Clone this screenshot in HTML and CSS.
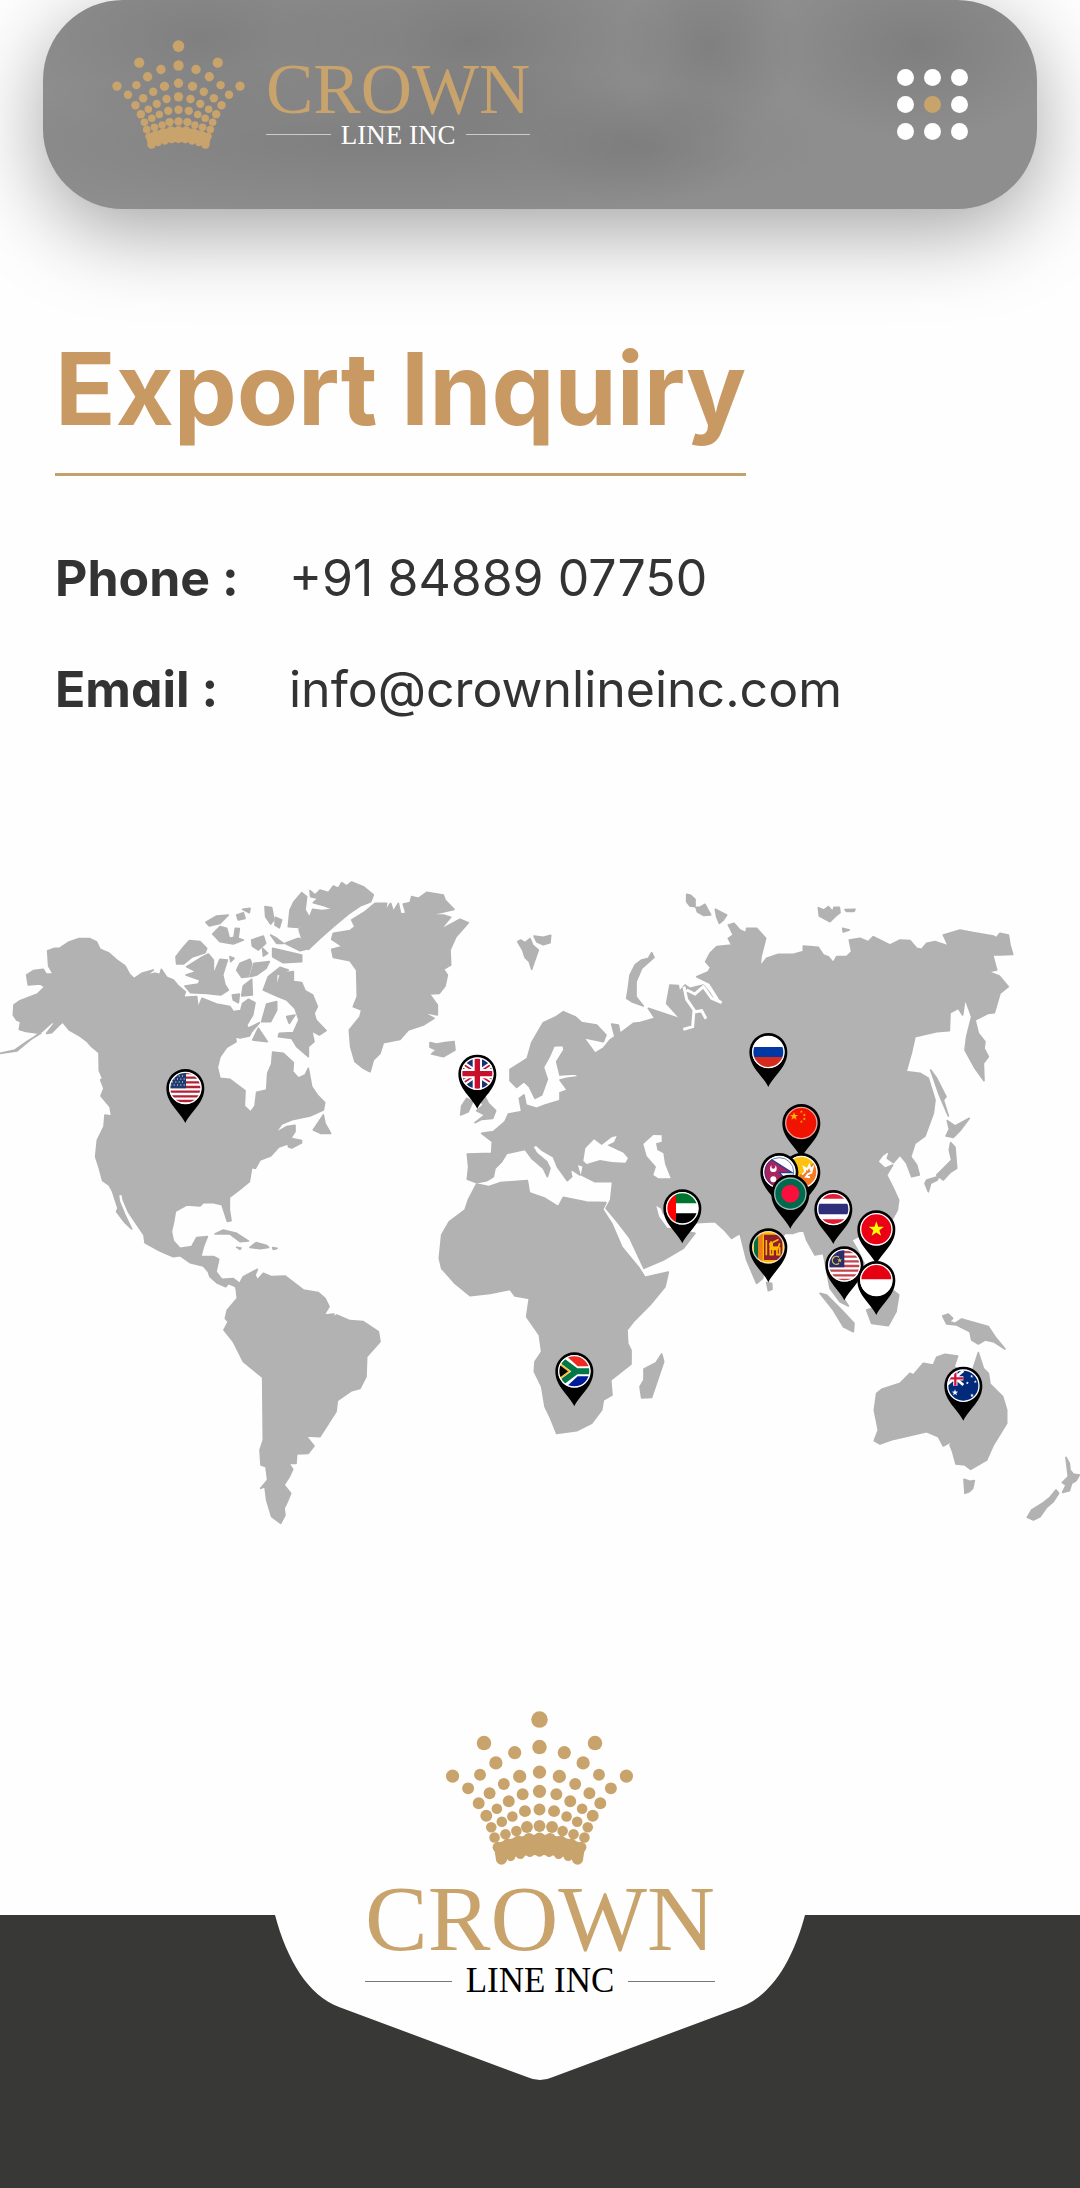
FILE: index.html
```html
<!DOCTYPE html>
<html lang="en">
<head>
    <meta charset="UTF-8">
    <meta name="viewport" content="width=device-width, initial-scale=1.0">

    <title>Crown Line Inc</title>
    <link rel="stylesheet" href="styles.css">
</head>

<body>
    <!-- shared shapes -->
    <svg class="defs" width="0" height="0" aria-hidden="true">
        <defs>
            <g id="crown-half">
                <circle cx="168" cy="157" r="22"/><circle cx="75" cy="186" r="20"/><circle cx="132" cy="217" r="20"/>
                <circle cx="263" cy="257" r="20"/><circle cx="180" cy="253" r="18"/><circle cx="60" cy="258" r="20"/>
                <circle cx="108" cy="281" r="18"/><circle cx="216" cy="294" r="18"/><circle cx="151" cy="309" r="18"/>
                <circle cx="51" cy="312" r="18"/><circle cx="93" cy="333" r="18"/><circle cx="184" cy="339" r="18"/>
                <circle cx="129" cy="356" r="16"/><circle cx="44" cy="363" r="18"/><circle cx="82" cy="379" r="16"/>
                <circle cx="161" cy="377" r="18"/><circle cx="114" cy="395" r="16"/><circle cx="38" cy="411" r="18"/>
                <circle cx="146" cy="412" r="16"/><circle cx="70" cy="423" r="16"/><circle cx="103" cy="433" r="16"/>
                <circle cx="136" cy="443" r="16"/><circle cx="126" cy="472" r="16"/><circle cx="96" cy="462" r="16"/>
                <circle cx="64" cy="454" r="17"/><circle cx="32" cy="447" r="18"/>
                <path d="M-1 434Q70 436 139 464L131 514Q70 496-1 496Z"/>
                <circle cx="115" cy="508" r="17"/><circle cx="87" cy="500" r="14"/><circle cx="58" cy="494" r="14"/>
                <circle cx="29" cy="489" r="13"/>
            </g>
            <symbol id="crown" viewBox="-284 60 568 466">
                <circle cx="0" cy="86" r="25"/><circle cx="0" cy="169" r="22"/><circle cx="0" cy="245" r="20"/>
                <circle cx="0" cy="303" r="20"/><circle cx="0" cy="358" r="18"/><circle cx="0" cy="408" r="18"/>
                <circle cx="0" cy="447" r="19"/><circle cx="0" cy="488" r="13"/>
                <use href="#crown-half"/>
                <use href="#crown-half" transform="scale(-1 1)"/>
            </symbol>
            <clipPath id="flag"><circle r="48"/></clipPath>
            <path id="pin" d="M0 105C-17 70-57 46-57 0A57 57 0 1 1 57 0C57 46 17 70 0 105Z"/>
            <circle id="ring" r="47" fill="none" stroke="#fff" stroke-width="4"/>
            <path id="star" d="M0-10L2.4-3.2 9.5-3.1 3.8 1.2 5.9 8.1 0 4-5.9 8.1-3.8 1.2-9.5-3.1-2.4-3.2Z"/>
        </defs>
    </svg>

    <header class="header">
        <a href="#" class="logo" aria-label="Crown Line Inc">
            <svg class="logo-crown"><use href="#crown"/></svg>
            <span class="logo-text">
                <span class="logo-name">CROWN</span>
                <span class="logo-tag">LINE INC</span>
            </span>
        </a>
        <button type="button" class="menu" aria-label="Menu">
            <span></span><span></span><span></span>
            <span></span><span class="gold"></span><span></span>
            <span></span><span></span><span></span>
        </button>
    </header>

    <main>
        <section class="inquiry">
            <h1>Export Inquiry</h1>
            <dl class="contact">
                <dt>Phone :</dt>
                <dd><a href="tel:+918488907750">+91 84889 07750</a></dd>
                <dt>Email :</dt>
                <dd><a href="mailto:info@crownlineinc.com">info@crownlineinc.com</a></dd>
            </dl>
        </section>

        <!-- export map -->
        <svg class="map" viewBox="0 0 3240 2040" role="img" aria-label="Export countries">
            <g class="land">
                <!-- north and central america -->
                <path d="M0 580L45 570 80 545 122 520 78 514 58 508 62 485 50 480 40 465 42 435 60 422 112 402 135 380 120 372 85 375 80 345 100 332 130 328 138 342 160 342 146 318 143 272 160 266 180 264 205 247 235 236 270 236 290 246 300 268 325 278 350 300 375 318 388 342 402 356 425 340 460 330 440 344 410 352 465 340 480 344 484 328 500 352 520 360 535 378 556 396 550 412 590 410 594 445 606 415 650 432 690 440 700 455 722 452 728 430 745 418 765 428 758 465 740 495 745 505 778 488 755 515 748 528 720 534 706 530 708 545 680 562 660 590 652 622 660 655 690 658 708 672 735 692 733 738 752 756 765 738 770 697 800 690 803 640 815 612 818 576 850 580 880 608 878 635 895 654 915 645 925 625 935 680 952 705 974 728 970 750 930 768 880 778 845 792 825 820 860 800 885 796 885 815 872 835 905 842 870 862 862 852 835 862 812 888 780 900 766 925 755 922 748 965 715 992 688 1012 688 1050 693 1082 682 1084 671 1050 666 1034 640 1028 610 1028 600 1038 560 1035 526 1054 521 1085 514 1115 520 1143 540 1165 575 1160 590 1133 622 1130 610 1160 602 1190 642 1190 656 1198 648 1235 665 1258 700 1256 716 1268 712 1290 700 1268 690 1265 677 1280 650 1268 630 1250 625 1235 610 1218 570 1208 540 1187 520 1190 480 1173 435 1148 432 1125 405 1085 385 1055 370 1020 367 1003 355 1003 358 1025 375 1065 395 1107 375 1088 350 1055 354 1045 338 995 328 976 308 962 298 925 287 890 292 840 312 800 315 765 335 768 330 740 303 708 312 685 302 660 308 655 298 632 297 578 275 560 262 545 240 528 208 510 188 486 175 498 155 518 140 520 168 484 155 488 125 515 90 540 50 573Z"/>
                <path d="M560 320L600 295 625 282 640 300 640 345 660 298 682 300 668 345 675 375 685 390 662 405 620 400 572 398 555 378 595 372 600 360 558 345 590 335Z"/>
                <path d="M528 290L550 262 568 242 600 245 620 265 615 278 575 292 550 312 530 312Z"/>
                <path d="M638 222L660 200 680 205 688 235 702 232 706 205 718 206 714 235 730 240 700 252 660 245Z"/>
                <path d="M618 187L650 168 685 165 660 190 628 198Z"/>
                <path d="M710 165L730 158 735 175 715 180ZM728 148L750 145 748 158ZM826 172L845 180 838 203 825 195Z"/>
                <path d="M795 140L815 143 822 180 812 192 797 170Z"/>
                <path d="M755 240L790 228 797 250 775 270 757 258ZM788 265L803 280 790 288ZM812 225L830 235 850 250 830 250Z"/>
                <path d="M818 265L860 275 905 285 905 305 850 308 818 290ZM855 250L895 235 930 248 928 265 900 272Z"/>
                <path d="M865 200L870 150 882 125 905 98 920 110 915 150 928 172 895 202Z"/>
                <path d="M930 92L945 105 960 90 985 98 1000 78 1015 85 1025 68 1040 78 1055 66 1090 80 1120 105 1112 125 1080 138 1045 162 1000 200 960 235 925 268 905 235 897 208 930 168 938 148 965 152 1000 148 975 138 940 128 955 115 932 110Z"/>
                <path d="M720 310L750 298 755 312 745 350 725 352 710 330ZM690 290L702 295 692 305ZM697 405L718 402 715 428 700 420Z"/>
                <path d="M790 390L805 350 840 322 865 330 830 345 828 390 842 340 880 335 880 365 905 368 915 392 938 405 952 440 942 460 948 480 978 512 958 525 935 512 942 545 925 560 925 590 890 560 875 535 835 530 838 520 880 518 897 480 885 445 860 420 830 408Z"/>
                <path d="M762 310L808 305 798 325 770 345 750 350ZM730 378L755 358 757 405 725 408Z"/>
                <path d="M785 485L800 432 830 425 830 450 812 485ZM758 540L775 505 802 545ZM860 470L885 465 868 490ZM940 810L970 765 975 790 992 820 962 820ZM865 860L900 842 905 848 875 864Z"/>
                <path d="M645 1122L670 1110 710 1120 745 1143 720 1145 690 1122ZM750 1162L768 1148 800 1157 806 1162 780 1166ZM710 1162L723 1164 720 1168ZM818 1163L831 1165 820 1168Z"/>

                <!-- greenland, europe, arabia -->
                <g transform="translate(990 0)">
                    <path d="M65 180L105 155 135 130 170 130 165 155 182 130 190 155 205 130 212 162 228 160 220 132 240 128 245 110 265 115 290 97 340 105 345 120 372 148 330 158 290 165 340 165 362 172 330 210 390 178 415 188 400 205 378 230 360 270 362 315 340 328 352 345 345 378 328 400 298 402 322 435 322 465 275 455 312 475 280 495 235 510 210 538 160 548 150 580 130 600 120 635 100 625 75 605 62 560 58 510 90 470 95 450 70 440 82 410 80 330 60 302 10 292 5 268 38 260 5 238 10 220 60 212 75 200Z"/>
                    <path d="M300 548L320 552 345 548 372 545 375 570 340 590 305 582 320 570 300 562Z"/>
                    <path d="M563 245L572 240 585 248 600 236 608 255 625 270 618 290 605 328 598 305 585 292 578 270ZM612 228L640 232 662 226 660 248 640 254 620 245Z"/>
                    <path d="M900 345L915 315 935 300 955 295 965 278 972 292 935 325 918 365 918 410 940 438 905 425 890 415 895 385Z"/>
                    <path d="M430 690L460 700 475 730 497 752 488 775 455 778 435 788 465 765 440 752 460 735ZM395 738L410 715 428 725 415 755 392 765Z"/>
                    <path d="M440 968L412 958 416 920 412 882 485 880 487 845 455 820 490 815 525 785 535 762 575 755 568 715 582 705 588 735 620 745 645 735 690 722 690 698 712 690 690 660 710 655 750 650 735 642 690 645 680 605 702 570 700 556 672 558 658 590 640 622 652 658 635 705 615 715 598 680 582 665 560 682 540 662 540 628 592 595 605 548 640 488 675 472 700 455 735 470 755 488 800 495 828 525 820 545 760 532 795 580 820 565 840 540 855 530 845 492 865 495 870 520 910 490 930 488 975 475 955 445 1000 460 1045 475 1110 505 1120 1085 1070 1080 1040 1085 1000 1060 995 1045 975 1032 985 1070 1010 1105 1050 1112 1095 1120 1060 1165 1000 1200 942 1225 930 1200 900 1135 862 1085 828 1045 842 1020 848 965 795 965 755 945 760 918 740 912 750 945 720 925 725 950 712 962 682 920 670 890 635 870 618 855 608 860 620 880 650 905 660 925 652 950 640 925 605 895 585 868 530 880 515 905 495 925 490 950 470 962Z"/>
                </g>

                <!-- asia -->
                <g transform="translate(1980 0)">
                    <path d="M60 475L20 430 30 375 55 377 58 395 75 375 90 385 130 375 150 400 165 425 188 430 150 370 110 350 145 335 152 322 137 305 150 280 170 260 215 255 205 235 220 225 205 195 222 190 240 210 258 218 260 205 290 205 317 235 303 290 300 320 320 295 355 283 400 283 430 275 430 258 475 262 490 285 505 290 520 308 530 290 560 290 575 275 568 240 600 235 625 245 640 230 690 255 720 240 750 242 770 265 785 268 800 250 825 245 865 258 850 225 900 210 940 218 1000 228 1025 245 1010 232 1020 220 1045 225 1050 255 1058 283 1020 285 998 285 1010 330 985 335 1018 348 1045 380 1020 400 1003 458 985 460 945 480 955 520 975 545 972 565 985 590 970 610 972 662 945 625 915 570 920 530 935 470 915 415 908 465 895 445 870 458 868 512 830 515 765 530 755 575 738 635 780 640 805 655 825 720 820 760 795 828 765 850 752 890 770 915 778 945 755 950 740 910 720 885 700 908 682 895 690 870 668 885 653 905 675 925 698 915 680 945 700 985 716 1020 712 1050 695 1080 650 1110 610 1122 575 1140 590 1165 612 1210 600 1240 560 1210 530 1160 518 1180 510 1230 540 1298 565 1338 540 1325 510 1285 500 1230 490 1180 465 1185 440 1140 430 1110 400 1120 375 1120 340 1170 315 1205 308 1255 290 1270 260 1200 240 1120 215 1135 195 1112 165 1085 110 1088 60 1082Z"/>
                    <path d="M812 630L830 655 858 710 850 720 865 768 838 705ZM862 782L885 798 928 775 900 812 880 832 858 828 868 808ZM872 848L885 862 890 925 870 938 850 960 830 945 860 915 875 900 868 870ZM800 960L835 950 832 960 812 970 805 995 795 970Z"/>
                    <path d="M80 103L92 106 105 118 105 140 90 138 80 125ZM108 142L120 142 135 133 152 165 130 166 112 155ZM166 148L200 165 190 180 178 190 170 170Z"/>
                    <path d="M475 143L492 150 505 140 518 155 522 142 538 142 540 158 525 170 510 185 478 168ZM555 149L585 148 582 154 560 154ZM548 205L568 210 550 216Z"/>
                    <path d="M480 1300L500 1305 545 1350 582 1390 580 1415 550 1400 520 1350ZM620 1350L650 1340 700 1292 716 1305 708 1355 685 1397 635 1390ZM320 1268L335 1270 336 1288 325 1292Z"/>
                    <path d="M848 1368L865 1362 878 1375 868 1385 885 1390 905 1377 985 1400 1005 1430 1035 1467 1000 1445 975 1440 955 1452 935 1440 930 1415 890 1395 860 1392Z"/>
                    <path d="M650 1600L665 1588 720 1570 750 1540 760 1545 790 1510 820 1515 830 1492 855 1483 893 1488 882 1520 915 1540 938 1530 955 1478 970 1525 985 1540 990 1572 1028 1610 1040 1650 1040 1690 1000 1755 980 1800 932 1828 915 1815 888 1812 878 1775 870 1755 882 1740 850 1758 835 1730 800 1715 745 1728 700 1738 660 1752 643 1742 655 1710 643 1650Z"/>
                    <path d="M912 1858L930 1864 943 1862 938 1885 928 1895 915 1900ZM1218 1792L1228 1810 1230 1830 1240 1842 1258 1845 1248 1862 1235 1870 1228 1892 1208 1897 1218 1875 1207 1868 1225 1850ZM1188 1890L1196 1900 1180 1925 1160 1942 1140 1970 1120 1980 1102 1972 1115 1950 1150 1928 1170 1912Z"/>
                </g>

                <!-- south america, africa -->
                <g transform="translate(600 960)">
                    <path d="M80 308L100 300 115 318 130 290 172 268 165 285 172 300 190 280 215 290 255 288 310 330 355 338 375 355 387 380 372 405 402 402 392 418 410 405 450 422 490 425 535 455 540 485 500 530 498 590 480 625 455 632 412 662 408 695 360 770 318 768 342 798 325 820 290 822 288 850 266 850 278 868 268 890 252 915 272 940 262 965 252 985 255 1005 242 1030 215 1010 200 960 195 920 182 925 203 900 198 860 183 855 180 810 190 780 188 592 130 545 100 485 72 450 85 425 76 415 82 390 112 355 108 320Z"/>
                    <path d="M830 12L865 20 900 8 982 2 988 38 1035 55 1075 80 1090 52 1160 66 1218 68 1208 88 1235 130 1265 200 1318 265 1335 292 1405 276 1395 320 1350 375 1300 425 1281 450 1283 490 1293 510 1293 552 1232 600 1236 645 1210 660 1205 690 1175 730 1130 752 1070 760 1052 715 1035 680 1025 620 1003 575 1005 545 1025 515 1018 465 980 410 988 355 945 348 930 328 870 340 810 347 765 310 725 265 718 235 725 165 748 125 795 90 805 60Z"/>
                    <path d="M1385 522L1391 545 1355 652 1325 654 1320 620 1332 600 1332 567 1368 548Z"/>
                </g>
            </g>

            <!-- inland water -->
            <g class="sea">
                <path d="M1750 903L1756 865 1782 838 1805 855 1835 832 1850 828 1842 846 1822 856 1870 878 1884 895 1876 908 1835 906 1800 900 1760 912Z"/>
                <path d="M1930 852L1960 825 1985 826 1985 845 1968 850 1972 870 1990 880 1995 912 2012 955 1975 955 1960 945 1968 920 1940 888Z"/>
                <path class="river" d="M2052 380L2060 418 2082 450 2078 500 2050 508M2082 456L2105 452 2118 476M2060 390L2085 402 2110 380 2135 415 2165 428"/>
            </g>

            <!-- pins -->
            <g transform="translate(556 684)">
                <use href="#pin"/>
                <g clip-path="url(#flag)">
                    <path fill="#fff" d="M-50-50H50V50H-50Z"/>
                    <path stroke="#b22234" stroke-width="7" d="M-50-45H50M-50-31H50M-50-17H50M-50-3H50M-50 11H50M-50 25H50M-50 39H50"/>
                    <path fill="#1f3a6e" d="M-50-50H2V1H-50Z"/>
                    <path stroke="#fff" stroke-width="3" stroke-dasharray="3 7" d="M-40-36H0M-45-27H0M-40-18H0M-45-9H0"/>
                </g>
                <use href="#ring"/>
            </g>
            <g transform="translate(1432 641)">
                <use href="#pin"/>
                <g clip-path="url(#flag)">
                    <path fill="#1d2f73" d="M-50-50H50V50H-50Z"/>
                    <path stroke="#fff" stroke-width="17" d="M-60-40L60 40M-60 40L60-40"/>
                    <path stroke="#c8102e" stroke-width="5" d="M-60-40L60 40M-60 40L60-40"/>
                    <path stroke="#fff" stroke-width="28" d="M0-50V50M-50 0H50"/>
                    <path stroke="#c8102e" stroke-width="16" d="M0-50V50M-50 0H50"/>
                </g>
                <use href="#ring"/>
            </g>
            <g transform="translate(2305 576)">
                <use href="#pin"/>
                <g clip-path="url(#flag)">
                    <path fill="#fff" d="M-50-50H50V50H-50Z"/>
                    <path fill="#0039a6" d="M-50-15H50V15H-50Z"/>
                    <path fill="#d52b1e" d="M-50 15H50V50H-50Z"/>
                </g>
                <use href="#ring"/>
            </g>
            <g transform="translate(2404 789)">
                <use href="#pin"/>
                <g clip-path="url(#flag)">
                    <path fill="#f01400" d="M-50-50H50V50H-50Z"/>
                    <g fill="#ffb400">
                        <use href="#star" transform="translate(-22 -20) scale(1.3)"/>
                        <use href="#star" transform="translate(0 -34) scale(.5)"/>
                        <use href="#star" transform="translate(9 -24) scale(.5)"/>
                        <use href="#star" transform="translate(9 -12) scale(.5)"/>
                        <use href="#star" transform="translate(0 -4) scale(.5)"/>
                    </g>
                </g>
                <use href="#ring" opacity=".6"/>
            </g>
            <g transform="translate(2404 936)">
                <use href="#pin"/>
                <g clip-path="url(#flag)">
                    <path fill="#ffc20e" d="M-50-50H50V50H-50Z"/>
                    <path fill="#f47920" d="M50-40V50H-50Z"/>
                    <path fill="none" stroke="#fff" stroke-width="6" d="M2 8L12-2 8-14 18-8 24-20 28-8 34-14 30 2 20 6 14 14 26 16"/>
                </g>
                <use href="#ring"/>
            </g>
            <g transform="translate(2338 936)">
                <use href="#pin"/>
                <g clip-path="url(#flag)">
                    <path fill="#fff" d="M-50-50H50V50H-50Z"/>
                    <path fill="#a8235f" stroke="#26418f" stroke-width="4" d="M-50-50L-28-40 38 2H0L40 44-50 50Z"/>
                    <circle cx="-18" cy="-10" r="10" fill="#fff"/><circle cx="-18" cy="-16" r="6" fill="#a8235f"/>
                    <circle cx="-18" cy="22" r="9" fill="#fff"/>
                </g>
                <use href="#ring"/>
                <circle r="43" fill="none" stroke="#26418f" stroke-width="2"/>
            </g>
            <g transform="translate(2371 1001)">
                <use href="#pin"/>
                <g clip-path="url(#flag)">
                    <path fill="#006a4e" d="M-50-50H50V50H-50Z"/>
                    <circle r="27" fill="#fb0f3c"/>
                </g>
                <use href="#ring" opacity=".6"/>
            </g>
            <g transform="translate(2047 1045)">
                <use href="#pin"/>
                <g clip-path="url(#flag)">
                    <path fill="#fff" d="M-50-50H50V50H-50Z"/>
                    <path fill="#00732f" d="M-50-50H50V-15H-50Z"/>
                    <path d="M-50 15H50V50H-50Z"/>
                    <path fill="#f00" d="M-50-50H-19V50H-50Z"/>
                </g>
                <use href="#ring"/>
            </g>
            <g transform="translate(2500 1047)">
                <use href="#pin"/>
                <g clip-path="url(#flag)">
                    <path fill="#fff" d="M-50-50H50V50H-50Z"/>
                    <path fill="#e31b35" d="M-50-50H50V-31H-50ZM-50 31H50V50H-50Z"/>
                    <path fill="#2d2f7a" d="M-50-16H50V16H-50Z"/>
                </g>
                <use href="#ring"/>
            </g>
            <g transform="translate(2629 1108)">
                <use href="#pin"/>
                <g clip-path="url(#flag)">
                    <path fill="#ec0015" d="M-50-50H50V50H-50Z"/>
                    <use href="#star" fill="#ff0" transform="scale(2.4)"/>
                </g>
                <use href="#ring"/>
            </g>
            <g transform="translate(2305 1162)">
                <use href="#pin"/>
                <g clip-path="url(#flag)">
                    <path fill="#ffb700" d="M-50-50H50V50H-50Z"/>
                    <path fill="#0b6b3a" d="M-43-50H-30V50H-43Z"/>
                    <path fill="#f07d1a" d="M-30-50H-17V50H-30Z"/>
                    <path fill="#8d1f2d" d="M-13-38H42V38H-13Z"/>
                    <path fill="none" stroke="#ffb700" stroke-width="5" d="M-6-22V24M12-14C20-20 26-18 30-24M8-18V0H30L34-12M6 2V22H14V6H26V22H34V0"/>
                    <path fill="#ffb700" d="M2-14H14V-2H30V8H4Z"/>
                </g>
                <use href="#ring" opacity=".7"/>
            </g>
            <g transform="translate(2533 1216)">
                <use href="#pin"/>
                <g clip-path="url(#flag)">
                    <path fill="#fff" d="M-50-50H50V50H-50Z"/>
                    <path stroke="#c4454f" stroke-width="7" d="M-50-40H50M-50-26H50M-50-12H50M-50 2H50M-50 16H50M-50 30H50M-50 44H50"/>
                    <path fill="#2a2c6b" d="M-50-50H0V6H-50Z"/>
                    <path fill="none" stroke="#d9c23f" stroke-width="4" d="M-16-24A12 12 0 1 0-16-6"/>
                    <use href="#star" fill="#d9c23f" transform="translate(-14 -15) scale(.8)"/>
                </g>
                <use href="#ring"/>
            </g>
            <g transform="translate(2629 1260)">
                <use href="#pin"/>
                <g clip-path="url(#flag)">
                    <path fill="#fff" d="M-50-50H50V50H-50Z"/>
                    <path fill="#e70011" d="M-50-50H50V-2H-50Z"/>
                </g>
                <use href="#ring"/>
            </g>
            <g transform="translate(1723 1534)">
                <use href="#pin"/>
                <g clip-path="url(#flag)">
                    <path fill="#fff" d="M-50-50H50V50H-50Z"/>
                    <path fill="#ee2a24" d="M-28-50H50V-15H10Z"/>
                    <path fill="#001b9a" d="M-28 50H50V15H10Z"/>
                    <path fill="none" stroke="#007749" stroke-width="18" d="M-50-42L6 0-50 42M6 0H50"/>
                    <path stroke="#ffb81c" stroke-width="5" d="M-52-28L-15 0-52 28Z"/>
                </g>
                <use href="#ring"/>
            </g>
            <g transform="translate(2890 1577)">
                <use href="#pin"/>
                <g clip-path="url(#flag)">
                    <path fill="#012a7a" d="M-50-50H50V50H-50Z"/>
                    <path stroke="#fff" stroke-width="8" d="M-50-45L0-2M-50-2L0-45"/>
                    <path stroke="#fff" stroke-width="13" d="M-24-50V0M-50-22H0"/>
                    <path stroke="#d3133a" stroke-width="7" d="M-24-50V0M-50-22H0"/>
                    <g fill="#fff">
                        <use href="#star" transform="translate(-25 21)"/>
                        <use href="#star" transform="translate(25 -28) scale(.5)"/>
                        <use href="#star" transform="translate(12 -8) scale(.5)"/>
                        <use href="#star" transform="translate(36 -12) scale(.5)"/>
                        <use href="#star" transform="translate(26 29) scale(.6)"/>
                    </g>
                </g>
                <use href="#ring"/>
            </g>
        </svg>
    </main>

    <footer class="footer">
        <svg class="notch" viewBox="0 0 530 165" aria-hidden="true">
            <path d="M0 0C12 45 33 80 64 92L252 162Q265 168 278 162L466 92C497 80 518 45 530 0Z"/>
        </svg>
        <a href="#" class="logo logo-large" aria-label="Crown Line Inc">
            <svg class="logo-crown"><use href="#crown"/></svg>
            <span class="logo-text">
                <span class="logo-name">CROWN</span>
                <span class="logo-tag">LINE INC</span>
            </span>
        </a>
    </footer>
</body>
</html>
```

FILE: styles.css
```css
* {
    box-sizing: border-box;
}
body {
    margin: 0;
    background: #fefefe;
    color: #333;
    font-family: Inter, "Open Sans", sans-serif;
    font-feature-settings: "cv11";
}
a {
    color: inherit;
    text-decoration: none;
}
.defs {
    position: absolute;
}

/* header */
.header {
    display: flex;
    align-items: center;
    justify-content: space-between;
    min-height: 209px;
    margin: 0 43px;
    padding: 0 69px;
    border-radius: 80px;
    background:
        radial-gradient(ellipse 20% 50% at 43% 20%, rgba(0, 0, 0, .12), transparent),
        radial-gradient(ellipse 9% 45% at 67% 22%, rgba(0, 0, 0, .1), transparent),
        radial-gradient(ellipse 15% 45% at 88% 22%, rgba(0, 0, 0, .11), transparent),
        radial-gradient(ellipse 20% 45% at 16% 18%, rgba(0, 0, 0, .1), transparent),
        radial-gradient(ellipse 46% 38% at 34% 68%, rgba(0, 0, 0, .11), transparent),
        radial-gradient(ellipse 12% 28% at 60% 70%, rgba(0, 0, 0, .07), transparent),
        #8e8e8e;
    box-shadow: 0 22px 84px rgba(0, 0, 0, .36);
}
.menu {
    display: grid;
    grid-template-columns: repeat(3, 17px);
    gap: 10px;
    padding: 0;
    border: 0;
    background: none;
    cursor: pointer;
}
.menu span {
    height: 17px;
    border-radius: 50%;
    background: #fff;
}
.menu .gold {
    background: #c9a36c;
}

/* logo */
.logo {
    display: flex;
    align-items: flex-end;
    gap: 21px;
    color: #fff;
    font-family: "Liberation Serif", serif;
}
.header .logo {
    padding-bottom: 21px;
}
.logo-crown {
    width: 133px;
    height: 109px;
    fill: #c9a36c;
}
.logo-text {
    display: flex;
    flex-direction: column;
    gap: 8px;
}
.logo-name {
    color: #c9a36c;
    font-size: 71px;
    line-height: 48px;
}
.logo-tag {
    display: flex;
    align-items: center;
    gap: 10px;
    font-size: 27px;
    line-height: 28px;
}
.logo-tag::before,
.logo-tag::after {
    content: "";
    flex: 1;
    height: 1px;
    background: #ccc;
}
.logo-large {
    position: relative;
    flex-direction: column;
    align-items: center;
    margin-top: -204px;
    color: #000;
}
.logo-large .logo-crown {
    width: 189px;
    height: 154px;
}
.logo-large .logo-text {
    gap: 13px;
}
.logo-large .logo-name {
    font-size: 94px;
    line-height: 64px;
}
.logo-large .logo-tag {
    gap: 14px;
    font-size: 35px;
    line-height: 36px;
}
.logo-large .logo-tag::before,
.logo-large .logo-tag::after {
    background: #777;
}

/* inquiry */
.inquiry {
    padding: 120px 55px 0;
}
h1 {
    width: fit-content;
    margin: 0 0 72px;
    padding-bottom: 24px;
    border-bottom: 3px solid #c4a06c;
    color: #c89962;
    font-size: 100px;
    line-height: 120px;
}
.contact {
    display: grid;
    grid-template-columns: 194px 1fr;
    gap: 51px 40px;
    margin: 0;
    font-size: 50px;
    line-height: 60px;
}
.contact dt {
    font-weight: 700;
}
.contact dd {
    margin: 0;
}

/* map */
.map {
    display: block;
    width: 100%;
    margin-top: 141px;
}
.land {
    fill: #b2b2b2;
    stroke: #b2b2b2;
    stroke-width: 5;
    stroke-linejoin: round;
}
.sea {
    fill: #fefefe;
}
.river {
    fill: none;
    stroke: #fefefe;
    stroke-width: 9;
}

/* footer */
.footer {
    position: relative;
    display: flex;
    flex-direction: column;
    align-items: center;
    margin-top: 375px;
    padding-bottom: 189px;
    background: #383836;
}
.notch {
    position: absolute;
    top: 0;
    left: 50%;
    width: 530px;
    transform: translateX(-50%);
    fill: #fefefe;
}
```
